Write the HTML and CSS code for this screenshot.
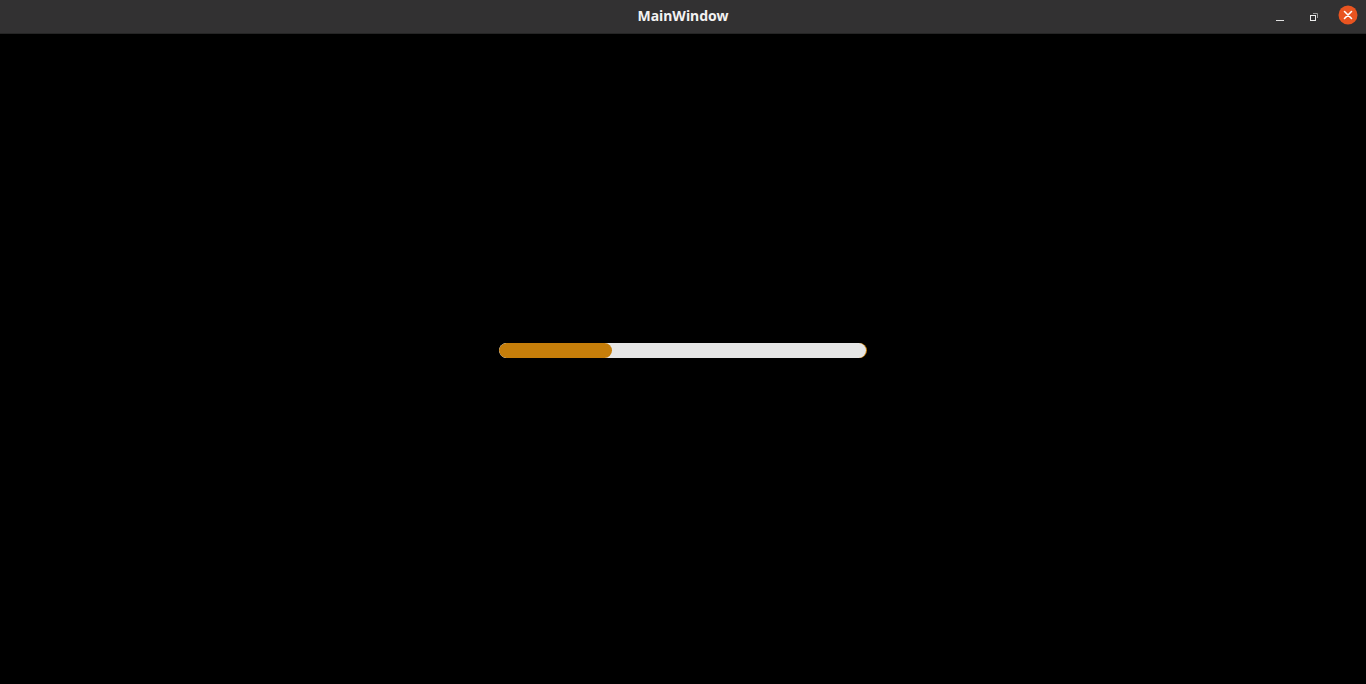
FILE: index.html
```html
<!DOCTYPE html>
<html lang="en">

<head>
    <meta charset="UTF-8">
    <meta name="viewport" content="width=device-width, initial-scale=1.0">
    <title>MainWindow</title>
    <link rel="stylesheet" href="styles.css">
</head>

<body>
    <div class="titlebar">
        <div class="title">MainWindow</div>
        <div class="controls">
            <span class="btn btn-min">
                <svg width="10" height="10" viewBox="0 0 10 10">
                    <rect x="1" y="7" width="8" height="1" fill="#e0e0e0" />
                </svg>
            </span>
            <span class="btn btn-max">
                <svg width="10" height="10" viewBox="0 0 10 10">
                    <path d="M4 1.5 H8.5 V6" fill="none" stroke="#9a9a9a" stroke-width="1" />
                    <rect x="1.5" y="3.5" width="5" height="5" fill="none" stroke="#ececec" stroke-width="1" />
                </svg>
            </span>
            <span class="btn btn-close">
                <svg width="20" height="20" viewBox="0 0 20 20">
                    <circle cx="10" cy="10" r="9.5" fill="#e95420" />
                    <path d="M6.5 6.5 L13.5 13.5 M13.5 6.5 L6.5 13.5" stroke="#fff" stroke-width="1.6" stroke-linecap="round" />
                </svg>
            </span>
        </div>
    </div>
    <div class="content">
        <div class="progress">
            <div class="chunk" style="width: 113px;"></div>
        </div>
    </div>
</body>

</html>
```

FILE: styles.css
```css
body {
    margin: 0;
    padding: 0;
    background-color: #000;
    font-family: "Noto Sans", "DejaVu Sans", sans-serif;
    height: 100vh;
    overflow: hidden;
}

.titlebar {
    position: relative;
    height: 33px;
    background-color: #323132;
    border-bottom: 1px solid #252525;
    display: flex;
    align-items: center;
    justify-content: center;
}

.title {
    color: #f2f2f2;
    font-size: 14px;
    font-weight: bold;
    line-height: 33px;
    margin-top: -2px;
}

.controls {
    position: absolute;
    right: 8px;
    top: 0;
    height: 33px;
    display: flex;
    align-items: center;
}

.btn {
    display: flex;
    align-items: center;
    justify-content: center;
}

.btn-min {
    width: 10px;
    height: 10px;
    margin-right: 24px;
    margin-top: 2px;
}

.btn-max {
    width: 10px;
    height: 10px;
    margin-right: 19px;
    margin-top: 1px;
}

.btn-close {
    width: 20px;
    height: 20px;
    margin-top: -3px;
}

.content {
    display: flex;
    justify-content: center;
    padding-top: 309px;
    padding-right: 1px;
}

.progress {
    width: 367px;
    height: 15px;
    background-color: #e6e6e6;
    border-radius: 8px;
    box-shadow: 1px 0 0 #c87f0a;
    overflow: hidden;
}

.chunk {
    height: 100%;
    background-color: #c67e0a;
    border-radius: 8px;
}
```
